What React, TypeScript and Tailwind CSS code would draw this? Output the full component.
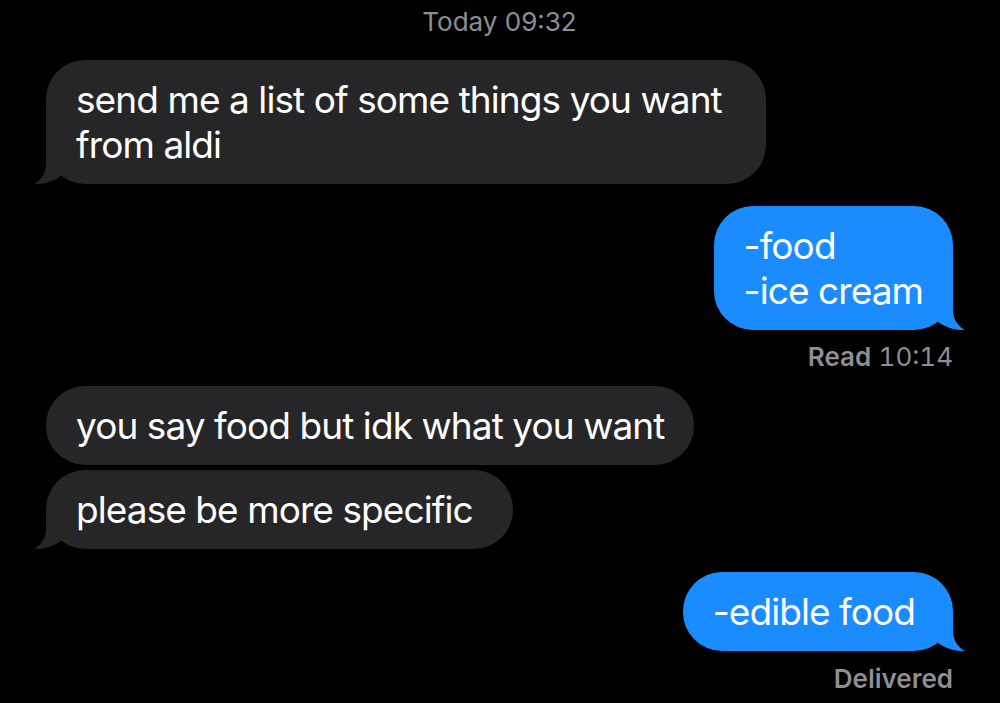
import React from "react";

type Side = "in" | "out";

function Tail({ side, color }: { side: Side; color: string }) {
  // hook at the bottom corner, mirrored for outgoing bubbles
  return (
    <svg
      className={`absolute bottom-0 h-[40px] w-[40px] ${
        side === "in" ? "left-[-12px]" : "right-[-12px] -scale-x-100"
      }`}
      viewBox="0 0 40 40"
    >
      <path
        d="M12 0 L12 20 C12 30 6 37 0 40 C10 40.5 20 37 27 32 L40 20 L40 0 Z"
        fill={color}
      />
    </svg>
  );
}

function Bubble({
  side,
  tail,
  className = "",
  children,
}: {
  side: Side;
  tail?: boolean;
  className?: string;
  children: React.ReactNode;
}) {
  const color = side === "in" ? "#262628" : "#1a8cff";
  return (
    <div
      className={`relative rounded-[39px] py-[17px] pl-[30px] text-[37px] leading-[45px] tracking-[-0.025em] text-white ${
        side === "in" ? "self-start bg-[#262628]" : "self-end bg-[#1a8cff]"
      } ${className}`}
    >
      {tail && <Tail side={side} color={color} />}
      <span className="relative">{children}</span>
    </div>
  );
}

export default function App() {
  return (
    <div
      className="flex min-h-screen w-full flex-col bg-black pl-[46px] pr-[47px]"
      style={{ fontFamily: "Inter, 'Noto Sans', sans-serif" }}
    >
      <div className="mt-[7px] text-center text-[26px] leading-[30px] text-[#8e8e93]">
        Today 09:32
      </div>

      <Bubble side="in" tail className="mt-[23px] w-[720px] pr-[30px]">
        send me a list of some things you want
        <br />
        from aldi
      </Bubble>

      <Bubble side="out" tail className="mt-[22px] pr-[30px]">
        -food
        <br />
        -ice cream
      </Bubble>

      <div className="mt-[12px] self-end text-[26px] leading-[30px] text-[#8e8e93]">
        <span className="font-semibold">Read</span>{" "}
        <span className="tabular-nums">10:14</span>
      </div>

      <Bubble side="in" className="mt-[14px] pr-[30px]">
        you say food but idk what you want
      </Bubble>

      <Bubble side="in" tail className="mt-[5px] pr-[40px]">
        please be more specific
      </Bubble>

      <Bubble side="out" tail className="mt-[23px] pr-[38px]">
        -edible food
      </Bubble>

      <div className="mt-[13px] self-end text-[26px] font-semibold leading-[30px] text-[#8e8e93]">
        Delivered
      </div>
    </div>
  );
}
